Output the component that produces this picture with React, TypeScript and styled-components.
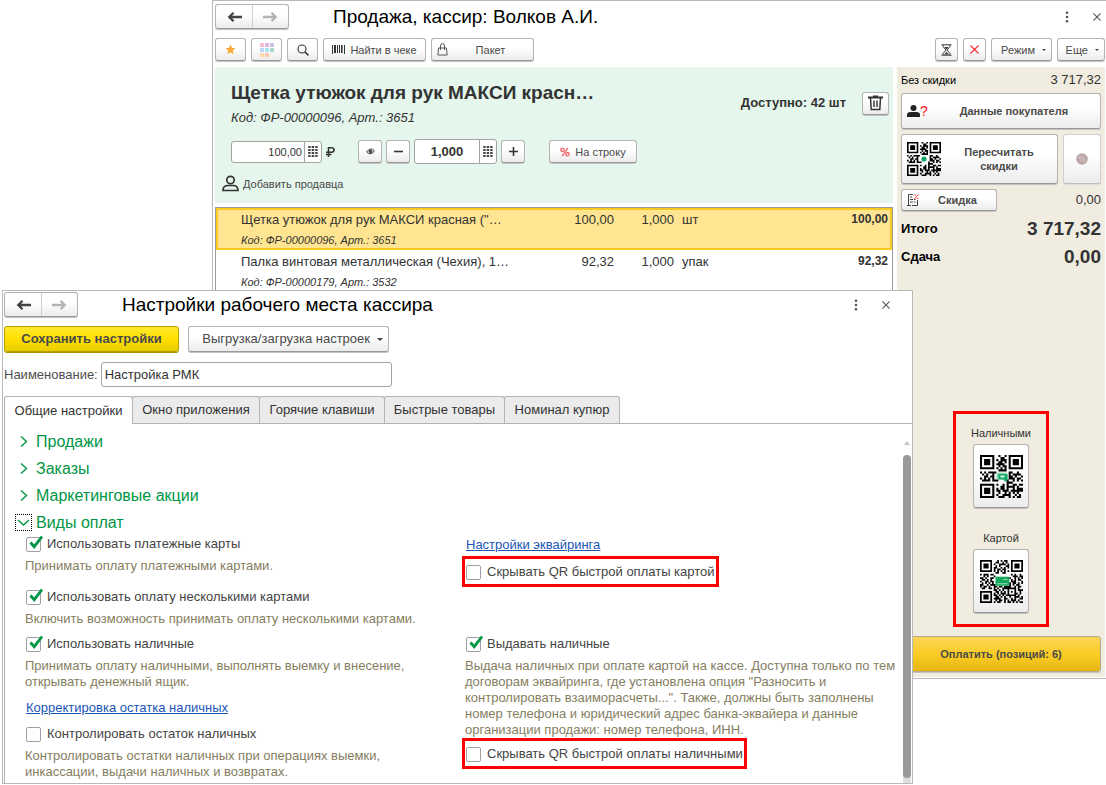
import React, { useId } from 'react';
import styled, { createGlobalStyle } from 'styled-components';

const GlobalStyle = createGlobalStyle`
  *, *::before, *::after { box-sizing: border-box; }
  body {
    margin: 0;
    background: #fff;
    color: #333;
    font: 13px/16px "Liberation Sans", Arial, sans-serif;
  }
  button, input { font: inherit; color: inherit; }
  svg { display: block; flex: none; }
`;

/* ---------- shared parts ---------- */

const Desktop = styled.main`
  position: relative;
  min-width: 1000px;
  min-height: 100vh;
`;

const PosWindow = styled.section`
  display: flex;
  flex-direction: column;
  min-height: 679px;
  margin-left: 212px;
  padding: 3px 1px 1px 2px;
  border: solid #b9b9b9;
  border-width: 1px 0 1px 1px;
  background: #fff;
`;

const SettingsWindow = styled.section`
  position: absolute;
  top: 290px;
  left: 2px;
  right: 193px;
  display: flex;
  flex-direction: column;
  padding: 1px 0 0 1px;
  border: 1px solid #b9b9b9;
  background: #fff;
`;

const TitleBar = styled.header<{ $inset: number }>`
  display: flex;
  align-items: center;
  padding-right: ${p => p.$inset}px;
`;

const Title = styled.h1`
  flex: 1;
  margin: 0 0 0 44px;
  color: #000;
  font-size: 19px;
  font-weight: 400;
  line-height: 24px;
  white-space: nowrap;
`;

const WindowTools = styled.div`
  display: flex;
  align-items: center;
  gap: 24px;
`;

const GhostButton = styled.button`
  display: flex;
  padding: 0;
  border: 0;
  background: none;
  color: #555;
`;

const Button = styled.button<{ $h?: number; $w?: number; $size?: number; $bold?: boolean; $faded?: boolean }>`
  display: inline-flex;
  flex: none;
  align-items: center;
  justify-content: center;
  gap: 5px;
  width: ${p => (p.$w ? p.$w + 'px' : 'auto')};
  height: ${p => p.$h ?? 23}px;
  padding: 0 5px;
  border: 1px solid ${p => (p.$faded ? '#cfcfcf' : '#b3b3b3')};
  border-bottom-color: ${p => (p.$faded ? '#bdbdbd' : '#999')};
  border-radius: 3px;
  background: linear-gradient(#fff 40%, #ececec);
  box-shadow: 0 1px 0 ${p => (p.$faded ? '#ddd' : '#c2c2c2')};
  color: #4a4a4a;
  font-size: ${p => p.$size ?? 11}px;
  font-weight: ${p => (p.$bold ? 700 : 400)};
  white-space: nowrap;
`;

const DropButton = styled(Button)`
  justify-content: flex-end;
  gap: 7px;
`;

const NavGroup = styled.div`
  display: flex;
  height: 25px;
  border: 1px solid #b3b3b3;
  border-bottom-color: #999;
  border-radius: 3px;
  background: linear-gradient(#fff 40%, #ececec);
  box-shadow: 0 1px 0 #c2c2c2;
`;

const NavButton = styled.button<{ $off?: boolean }>`
  display: flex;
  align-items: center;
  justify-content: center;
  width: 36px;
  padding: 0;
  border: 0;
  background: none;
  color: ${p => (p.$off ? '#b3b3b3' : '#444')};
  & + & { border-left: 1px solid #d0d0d0; }
`;

const ButtonText = styled.span`
  flex: 1;
  text-align: center;
`;

const Caret = styled.span<{ $wide?: boolean }>`
  border: solid transparent;
  border-width: ${p => (p.$wide ? '3px 3px 0' : '2px 2px 0')};
  border-top-color: #444;
`;

/* ---------- sale window ---------- */

const Toolbar = styled.div`
  display: flex;
  align-items: center;
  gap: 5px;
  padding: 9px 0 6px;
`;

const Spacer = styled.div`
  flex: 1;
`;

const PosBody = styled.div`
  display: flex;
  flex: 1;
  gap: 4px;
`;

const PosMain = styled.div`
  display: flex;
  flex: 1;
  flex-direction: column;
  gap: 4px;
  min-width: 0;
`;

const Card = styled.div`
  height: 136px;
  padding: 13px 4px 0 16px;
  background: #e5f6ed;
`;

const CardTop = styled.div`
  display: flex;
  align-items: center;
`;

const CardInfo = styled.div`
  flex: 1;
`;

const CardName = styled.h2`
  margin: 0;
  font-size: 19px;
  font-weight: 700;
  line-height: 26px;
`;

const CardCode = styled.p`
  margin: 4px 0 0;
  font-style: italic;
`;

const Stock = styled.strong`
  margin: 0 16px 0 0;
`;

const CardControls = styled.div`
  display: flex;
  align-items: center;
  gap: 4px;
  height: 25px;
  margin-top: 13px;
`;

const NumberBox = styled.div<{ $w: number; $big?: boolean }>`
  display: flex;
  width: ${p => p.$w}px;
  height: ${p => (p.$big ? 25 : 22)}px;
  border: 1px solid #a3a3a3;
  border-radius: 3px;
  background: #fff;
`;

const NumberInput = styled.input<{ $big?: boolean }>`
  flex: 1;
  min-width: 0;
  padding: 0 2px;
  border: 0;
  background: none;
  font-size: ${p => (p.$big ? 13 : 11)}px;
  font-weight: ${p => (p.$big ? 700 : 400)};
  text-align: ${p => (p.$big ? 'center' : 'right')};
`;

const KeypadButton = styled.button`
  display: flex;
  align-items: center;
  justify-content: center;
  width: 17px;
  padding: 0;
  border: 0;
  border-left: 1px solid #a3a3a3;
  background: none;
`;

const Currency = styled.span`
  width: 28px;
`;

const Gap = styled.span`
  width: 16px;
`;

const SellerButton = styled.button`
  display: flex;
  align-items: center;
  gap: 4px;
  margin: 11px 0 0 -9px;
  padding: 0;
  border: 0;
  background: none;
  color: #4a4a4a;
  font-size: 11px;
`;

const Lines = styled.div`
  flex: 1;
  border: solid #9a9a9a;
  border-width: 1px 1px 0;
`;

const LinesTable = styled.table`
  width: 100%;
  border-collapse: collapse;
  table-layout: fixed;
`;

const Line = styled.tr<{ $active?: boolean }>`
  height: 42px;
  background: ${p => (p.$active ? '#ffe591' : '#fff')};
  outline: ${p => (p.$active ? '2px solid #fac920' : 'none')};
  outline-offset: -2px;
`;

const CELL_PADDING = { name: '4px 0 0 25px', number: '4px 0 0', unit: '4px 0 0 8px', sum: '3px 4px 0 0' };

const Cell = styled.td<{ $kind: keyof typeof CELL_PADDING }>`
  padding: ${p => CELL_PADDING[p.$kind]};
  font-size: ${p => (p.$kind === 'sum' ? 12 : 13)}px;
  font-weight: ${p => (p.$kind === 'sum' ? 700 : 400)};
  text-align: ${p => (p.$kind === 'number' || p.$kind === 'sum' ? 'right' : 'left')};
  vertical-align: top;
  white-space: nowrap;
`;

const LineCode = styled.div`
  margin-top: 4px;
  font-size: 11px;
  font-style: italic;
`;

const Side = styled.aside`
  display: flex;
  flex: none;
  flex-direction: column;
  width: 208px;
  padding: 4px 4px 5px;
  background: #f0ece0;
`;

const SideRow = styled.div<{ $gap?: number; $top?: number; $h?: number }>`
  display: flex;
  align-items: center;
  justify-content: space-between;
  gap: ${p => p.$gap ?? 0}px;
  min-height: ${p => p.$h ?? 18}px;
  margin-top: ${p => p.$top ?? 0}px;
`;

const SideLabel = styled.span<{ $bold?: boolean }>`
  color: #000;
  font-size: ${p => (p.$bold ? 13 : 11)}px;
  font-weight: ${p => (p.$bold ? 700 : 400)};
`;

const Amount = styled.span<{ $big?: boolean }>`
  font-size: ${p => (p.$big ? 19 : 13)}px;
  font-weight: ${p => (p.$big ? 700 : 400)};
`;

const WideButton = styled(Button)`
  flex: 1;
  line-height: 14px;
  white-space: normal;
`;

const BuyerIcon = styled.span`
  display: flex;
  color: #f11;
  font-size: 14px;
  font-weight: 400;
`;

const QuickPay = styled.div`
  display: flex;
  flex-direction: column;
  align-items: center;
  align-self: center;
  width: 96px;
  margin: auto 0 9px;
  padding: 11px 0;
  border: 3px solid #f00;
`;

const QuickLabel = styled.span<{ $top?: number }>`
  margin: ${p => p.$top ?? 0}px 0 3px;
  font-size: 11px;
`;

const PayButton = styled(Button)`
  background: linear-gradient(#fcd558, #f9cb20 55%, #e6b617);
  border-color: #b3aa90;
`;

/* ---------- settings window ---------- */

const Actions = styled.div`
  display: flex;
  gap: 9px;
  padding-top: 9px;
`;

const SaveButton = styled(Button)`
  border-color: #b39f00;
  background: linear-gradient(#ffe92e, #ffe000 50%, #e8cd00);
  box-shadow: 0 1px 0 #a89500;
`;

const NameRow = styled.div`
  display: flex;
  align-items: center;
  gap: 3px;
  padding: 10px 0 9px;
  color: #4d4d4d;
`;

const NameInput = styled.input`
  width: 291px;
  height: 25px;
  padding: 0 3px;
  border: 1px solid #a3a3a3;
  border-radius: 3px;
  background: #fff;
  color: #333;
`;

const Tabs = styled.div`
  display: flex;
  border-bottom: 1px solid #b3b3b3;
`;

const Tab = styled.button<{ $w: number; $on?: boolean }>`
  width: ${p => p.$w}px;
  height: ${p => (p.$on ? 28 : 27)}px;
  margin: 0 -1px ${p => (p.$on ? -1 : 0)}px 0;
  padding: 0;
  border: 1px solid #b3b3b3;
  border-bottom: 0;
  border-radius: 3px 3px 0 0;
  background: ${p => (p.$on ? '#fff' : '#ebebeb')};
  white-space: nowrap;
`;

const Panel = styled.div`
  display: flex;
  border-left: 1px solid #b3b3b3;
`;

const PanelBody = styled.div`
  flex: 1;
  padding: 4px 0 3px;
`;

const Scroller = styled.div`
  display: flex;
  flex-direction: column;
  align-items: center;
  width: 10px;
  padding-top: 17px;
`;

const ScrollTrack = styled.div`
  flex: 1;
  width: 8px;
  margin-top: 10px;
  padding-bottom: 5px;
  background: linear-gradient(transparent 50%, #ddd 50%);
`;

const ScrollThumb = styled.div`
  height: 100%;
  border-radius: 4px;
  background: #999;
`;

const SectionTitle = styled.h2`
  margin: 0;
  font-size: 16px;
  font-weight: 400;
`;

const SectionButton = styled.button`
  display: flex;
  align-items: center;
  gap: 4px;
  height: 27px;
  padding: 0 0 0 10px;
  border: 0;
  background: none;
  color: #009646;
`;

const SectionMark = styled.span<{ $open?: boolean }>`
  display: flex;
  align-items: center;
  justify-content: center;
  width: 17px;
  height: 17px;
  border: 1px dotted ${p => (p.$open ? '#000' : 'transparent')};
`;

const Columns = styled.div`
  display: grid;
  grid-template-columns: 1fr 1fr;
  padding-left: 20px;
  margin: 0 -3px 9px 0;
  &:last-child { margin-bottom: 0; }
`;

const Column = styled.div`
  display: flex;
  flex-direction: column;
  align-items: flex-start;
`;

const CheckLabel = styled.label`
  display: flex;
  align-items: center;
  gap: 6px;
  height: 16px;
  padding-left: 1px;
  color: #444;
  white-space: nowrap;
`;

const CheckBox = styled.span`
  position: relative;
  display: flex;
`;

const CheckInput = styled.input`
  appearance: none;
  width: 15px;
  height: 15px;
  margin: 0;
  border: 1px solid #a0a0a0;
  border-radius: 2px;
  background: #fff;
  & + svg { display: none; }
  &:checked + svg { display: block; }
`;

const CheckMark = styled.svg`
  position: absolute;
  right: -2px;
  bottom: 2px;
  pointer-events: none;
`;

const Hint = styled.p<{ $last?: boolean; $narrow?: boolean }>`
  margin: 6px ${p => (p.$narrow ? 40 : 8)}px ${p => (p.$last ? 0 : 15)}px 0;
  color: #857e5f;
`;

const Link = styled.a<{ $top: number; $bottom: number }>`
  margin: ${p => p.$top}px 0 ${p => p.$bottom}px 1px;
  color: #1a55b8;
`;

const Highlight = styled.div`
  margin-left: -3px;
  padding: 5px 1px 4px 0;
  border: 3px solid #f00;
`;

/* ---------- icons ---------- */

const Arrow = ({ flip }: { flip?: boolean }) => (
  <svg width="15" height="12" viewBox="0 0 15 12" fill="none" stroke="currentColor" strokeWidth="2.300">
    {flip ? <path d="M0 6h13M8.500 1.800L12.700 6l-4.200 4.200" /> : <path d="M15 6H2M6.500 1.800L2.300 6l4.200 4.200" />}
  </svg>
);

const Dots = () => (
  <svg width="4" height="12" viewBox="0 0 4 12" fill="currentColor">
    <circle cx="2" cy="1.800" r="1.300" /><circle cx="2" cy="6" r="1.300" /><circle cx="2" cy="10.200" r="1.300" />
  </svg>
);

const Cross = ({ size = 8, color = 'currentColor' }: { size?: number; color?: string }) => (
  <svg width={size} height={size} viewBox="0 0 8 8" stroke={color} strokeWidth="1.100">
    <path d="M.4.4l7.200 7.200M7.600.4L.4 7.600" />
  </svg>
);

const Star = () => (
  <svg width="11" height="11" viewBox="0 0 11 11" fill="#fbab35">
    <path d="M5.5.6l1.4 3.2 3.6.4-2.7 2.4.8 3.6-3.1-1.9-3.1 1.9.8-3.6L.5 4.2l3.6-.4z" />
  </svg>
);

const SWATCHES = ['#f6bccb', '#dcb7e2', '#c3c6e8', '#b7d9f6', '#aee6f0', '#a9d8d2', '#fcdca8', '#fbcab0'];
const Palette = () => (
  <svg width="14" height="14" viewBox="0 0 14 14">
    {SWATCHES.map((c, i) => (
      <rect key={c} x={(i % 3) * 5} y={Math.floor(i / 3) * 5} width="4" height="4" fill={c} />
    ))}
  </svg>
);

const Loupe = () => (
  <svg width="12" height="12" viewBox="0 0 12 12" fill="none" stroke="#333">
    <circle cx="5" cy="5" r="4" strokeWidth="1.100" /><path d="M8 8l3.400 3.400" strokeWidth="1.600" />
  </svg>
);

const Barcode = () => (
  <svg width="13" height="9" viewBox="0 0 13 9" fill="#333">
    <path d="M0 0h1v9H0zM2 0h2v8H2zM5 0h1v8H5zM7 0h1v8H7zM9 0h1.600v8H9zM12 0h1v9h-1z" />
  </svg>
);

const Bag = () => (
  <svg width="11" height="13" viewBox="0 0 11 13" fill="none" stroke="#555">
    <path d="M1.500 5h8l.6 7H.9zM3.500 7V3q0-2.400 2-2.400t2 2.400v4" />
  </svg>
);

const Hourglass = () => (
  <svg width="11" height="12" viewBox="0 0 11 12" fill="none" stroke="#333">
    <path d="M.5.8h10M.5 11.200h10M2 1v1.500L5 6 2 9.500V11M9 1v1.500L6 6l3 3.500V11" />
    <path d="M3.500 3h4L5.500 5.500zM3 10.500l2.500-2.500L8 10.500z" fill="#333" stroke="none" />
  </svg>
);

const Trash = () => (
  <svg width="15" height="16" viewBox="0 0 15 16" fill="none" stroke="#333">
    <path d="M0 2.500h15M5 1.500h5" strokeWidth="2" />
    <path d="M2.500 3l.7 11.500h8.600L12.500 3" strokeWidth="1.500" /><path d="M6 5.500v6.500M9 5.500v6.500" strokeWidth="1.400" />
  </svg>
);

const Keypad = () => (
  <svg width="10" height="12" viewBox="0 0 10 12" fill="#444">
    {[0, 1, 2, 3].map(r => [0, 1, 2].map(c => (
      <rect key={r + '-' + c} x={c * 3.5 + 0.2} y={r * 3} width="2.400" height="2" />
    )))}
  </svg>
);

const Ruble = () => (
  <svg width="9" height="10" viewBox="0 0 9 10" fill="none" stroke="#333" strokeWidth="1.600">
    <path d="M2.500 10V.8h3Q8 .8 8 3T5.500 5.200H0M0 7.500h5.500" />
  </svg>
);

const Eye = () => (
  <svg width="9" height="7" viewBox="0 0 9 7" fill="none" stroke="#444">
    <path d="M.5 4Q4.500-1.500 8.500 3M.5 4q4 4 8-1" /><circle cx="4.500" cy="3.500" r="1.500" fill="#444" />
  </svg>
);

const Sign = ({ plus }: { plus?: boolean }) => (
  <svg width="9" height="9" viewBox="0 0 9 9" stroke="#333" strokeWidth="1.600">
    <path d={plus ? 'M0 4.500h9M4.500 0v9' : 'M0 4.500h9'} />
  </svg>
);

const Percent = () => (
  <svg width="10" height="10" viewBox="0 0 10 10" fill="none" stroke="#f26a6e" strokeWidth="1.400">
    <circle cx="2.500" cy="2.800" r="1.700" /><circle cx="7.500" cy="7.200" r="1.700" /><path d="M8 .8L2 9.200" />
  </svg>
);

const Person = () => (
  <svg width="17" height="17" viewBox="0 0 17 17" fill="none" stroke="#333" strokeWidth="1.700">
    <circle cx="8.500" cy="5" r="3.700" /><path d="M1 15.500q0-5 5-5h5q5 0 5 5z" />
  </svg>
);

const PersonSolid = () => (
  <svg width="13" height="14" viewBox="0 0 13 14" fill="#222">
    <circle cx="6.500" cy="4" r="3" /><path d="M0 13V11q0-3 3.500-3h6q3.500 0 3.500 3v2z" />
  </svg>
);

const Receipt = () => (
  <svg width="12" height="12" viewBox="0 0 12 12" fill="none" stroke="#444">
    <path d="M6 .5H1.500v11M0 11.500h4M3 3h2M3 5.500h3M3 8h3M7 5.500h1.500M7 8h1.500M10.500 6v5.500H5" />
    <path d="M11.500.5l-4 4.500M7.500 1h1.500M10 4.500h1.500" stroke="#f33" />
  </svg>
);

const RoundPercent = () => (
  <svg width="12" height="12" viewBox="0 0 12 12">
    <circle cx="6" cy="6" r="5.800" fill="#bba7a7" />
    <g fill="none" stroke="#d6c8c8"><circle cx="4" cy="4.500" r="1.200" /><circle cx="8" cy="7.500" r="1.200" /><path d="M8 3L4 9" /></g>
  </svg>
);

const Chevron = ({ down }: { down?: boolean }) => (
  <svg width="13" height="13" viewBox="0 0 13 13" fill="none" stroke="currentColor" strokeWidth="1.400">
    <path d={down ? 'M1 4l5.500 5L12 4' : 'M4 1.500l5.500 5L4 11.500'} />
  </svg>
);

const CODE_CASH = [
  '#######..#..#.#######', '#.....#...##..#.....#', '#.###.#.#.###.#.###.#', '#.###.#..##.#.#.###.#',
  '#.###.#.####..#.###.#', '#.....#..#.##.#.....#', '#######.#.#.#.#######', '.........####........',
  '#.#.####......##..#..', '.#.#..#.......#.####.', '..##.##.......##.#..#', '#.#.#.#.......###.##.',
  '.####.###....#..#.#.#', '.............###.....', '#######.#..#.#..##.##', '#.....#...##.####.#..',
  '#.###.#.#.##.#..#.###', '#.###.#.##.###.######', '#.###.#..#..#.#.#.#..', '#.....#.#..####..#.#.', '#######..###..#.#.##.',
];
const CODE_CARD = [
  '#######...#.#.##..#######', '#.....#..##..#.#..#.....#', '#.###.#.#..####.#.#.###.#', '#.###.#..#.#...##.#.###.#',
  '#.###.#.##..#.#.#.#.###.#', '#.....#.#.##.##...#.....#', '#######.#.#.#.#.#.#######', '.........##..##..........',
  '#.###.##..........#.#..#.', '..#.#...#..........###.##', '##.#..##.........#..#.#.#', '.##.#.#...........#.#.##.',
  '#..##.##..........###...#', '.#.#.#.#.........#.##.#.#', '##..#.###........#.#.##..', '#.##.#..##.##.####..#.##.',
  '.##..##.#.#..########.#..', '........##.#.#..#...#.###', '#######..##.#.#.#.#.#..#.', '#.....#.#.#.###.#...##.#.',
  '#.###.#.##.#.#.######.#..', '#.###.#..##.#.#..#..###.#', '#.###.#.####..##..#.#..##', '#.....#..#.##.#.#.###.#..', '#######.#.##..#.##.#.#.##',
];

const QrCode = ({ rows, size, mark }: { rows: string[]; size: number; mark: 'dot' | 'cash' | 'card' }) => {
  const n = rows.length;
  const d = rows.map((row, y) => row.split('').map((c, x) => (c === '#' ? `M${x} ${y}h1v1h-1z` : '')).join('')).join('');
  return (
    <svg width={size} height={size} viewBox={`0 0 ${n} ${n}`}>
      <path d={d} fill="#000" />
      {mark === 'dot' && <circle cx="10.500" cy="10.500" r="1.600" fill="#13a866" />}
      {mark === 'cash' && (
        <g>
          <path d="M8 8.600h5v3H8z" fill="#8fd5b3" /><path d="M9 9.300h4.500v2.700H9z" fill="#13a866" />
          <path d="M10 10h2v1h-2z" fill="#d8f3e6" /><circle cx="12.500" cy="12" r=".9" fill="#13a866" />
        </g>
      )}
      {mark === 'card' && (
        <g>
          <rect x="9" y="9.800" width="8" height="5.200" rx=".4" fill="#13a85c" />
          <path d="M13.500 11.300h2.500M10 13.800h6" stroke="#b6e6cc" strokeWidth=".5" />
        </g>
      )}
    </svg>
  );
};

/* ---------- composed pieces ---------- */

const NavButtons = () => (
  <NavGroup>
    <NavButton type="button" aria-label="Назад"><Arrow /></NavButton>
    <NavButton type="button" aria-label="Вперед" $off><Arrow flip /></NavButton>
  </NavGroup>
);

const WindowHeader = ({ title, inset }: { title: string; inset: number }) => (
  <TitleBar $inset={inset}>
    <NavButtons />
    <Title>{title}</Title>
    <WindowTools>
      <GhostButton type="button" aria-label="Меню"><Dots /></GhostButton>
      <GhostButton type="button" aria-label="Закрыть"><Cross /></GhostButton>
    </WindowTools>
  </TitleBar>
);

const Check = ({ label, checked }: { label: string; checked?: boolean }) => {
  const id = useId();
  return (
    <CheckLabel htmlFor={id}>
      <CheckBox>
        <CheckInput id={id} type="checkbox" defaultChecked={checked} />
        <CheckMark width="15" height="15" viewBox="0 0 15 15" fill="none" stroke="#009646" strokeWidth="2.800">
          <path d="M2.500 7.500l3.700 4.200L14 1.500" />
        </CheckMark>
      </CheckBox>
      {label}
    </CheckLabel>
  );
};

const Section = ({ title, open }: { title: string; open?: boolean }) => (
  <SectionTitle>
    <SectionButton type="button" aria-expanded={!!open}>
      <SectionMark $open={open}><Chevron down={open} /></SectionMark>
      {title}
    </SectionButton>
  </SectionTitle>
);

const LINES = [
  { name: 'Щетка утюжок для рук МАКСИ красная ("…', code: 'Код: ФР-00000096, Арт.: 3651', price: '100,00', qty: '1,000', unit: 'шт', sum: '100,00' },
  { name: 'Палка винтовая металлическая (Чехия), 1…', code: 'Код: ФР-00000179, Арт.: 3532', price: '92,32', qty: '1,000', unit: 'упак', sum: '92,32' },
];

const TABS = [
  { name: 'Общие настройки', w: 129 }, { name: 'Окно приложения', w: 128 }, { name: 'Горячие клавиши', w: 126 },
  { name: 'Быстрые товары', w: 121 }, { name: 'Номинал купюр', w: 116 },
];

const SaleWindow = () => (
  <PosWindow>
    <WindowHeader title="Продажа, кассир: Волков А.И." inset={4} />
    <Toolbar>
      <Button type="button" $w={31} aria-label="Избранное"><Star /></Button>
      <Button type="button" $w={31} aria-label="Палитра"><Palette /></Button>
      <Button type="button" $w={31} aria-label="Поиск"><Loupe /></Button>
      <Button type="button" $w={103}><Barcode />Найти в чеке</Button>
      <Button type="button" $w={103}><Bag /><ButtonText>Пакет</ButtonText></Button>
      <Spacer />
      <Button type="button" $w={23} aria-label="Отложить"><Hourglass /></Button>
      <Button type="button" $w={23} aria-label="Отменить"><Cross size={9} color="#f33" /></Button>
      <DropButton type="button" $w={61}>Режим <Caret /></DropButton>
      <DropButton type="button" $w={48}>Еще <Caret /></DropButton>
    </Toolbar>
    <PosBody>
      <PosMain>
        <Card>
          <CardTop>
            <CardInfo>
              <CardName>Щетка утюжок для рук МАКСИ красн…</CardName>
              <CardCode>Код: ФР-00000096, Арт.: 3651</CardCode>
            </CardInfo>
            <Stock>Доступно: 42 шт</Stock>
            <Button type="button" $w={27} aria-label="Удалить"><Trash /></Button>
          </CardTop>
          <CardControls>
            <NumberBox $w={91}>
              <NumberInput aria-label="Цена" defaultValue="100,00" />
              <KeypadButton type="button" aria-label="Калькулятор цены"><Keypad /></KeypadButton>
            </NumberBox>
            <Currency><Ruble /></Currency>
            <Button type="button" $w={24} aria-label="Показать"><Eye /></Button>
            <Button type="button" $w={24} aria-label="Меньше"><Sign /></Button>
            <NumberBox $w={83} $big>
              <NumberInput aria-label="Количество" defaultValue="1,000" $big />
              <KeypadButton type="button" aria-label="Калькулятор количества"><Keypad /></KeypadButton>
            </NumberBox>
            <Button type="button" $w={24} aria-label="Больше"><Sign plus /></Button>
            <Gap />
            <Button type="button" $w={88}><Percent />На строку</Button>
          </CardControls>
          <SellerButton type="button"><Person />Добавить продавца</SellerButton>
        </Card>
        <Lines>
          <LinesTable>
            <colgroup>
              <col /><col width="100" /><col width="60" /><col width="80" /><col width="138" />
            </colgroup>
            <tbody>
              {LINES.map((l, i) => (
                <Line key={l.code} $active={i === 0}>
                  <Cell $kind="name">{l.name}<LineCode>{l.code}</LineCode></Cell>
                  <Cell $kind="number">{l.price}</Cell>
                  <Cell $kind="number">{l.qty}</Cell>
                  <Cell $kind="unit">{l.unit}</Cell>
                  <Cell $kind="sum">{l.sum}</Cell>
                </Line>
              ))}
            </tbody>
          </LinesTable>
        </Lines>
      </PosMain>
      <Side>
        <SideRow><SideLabel>Без скидки</SideLabel><Amount>3 717,32</Amount></SideRow>
        <SideRow $top={4}>
          <WideButton type="button" $h={36} $bold>
            <BuyerIcon><PersonSolid />?</BuyerIcon><ButtonText>Данные покупателя</ButtonText>
          </WideButton>
        </SideRow>
        <SideRow $top={5} $gap={5}>
          <WideButton type="button" $h={50} $bold>
            <QrCode rows={CODE_CASH} size={34} mark="dot" /><ButtonText>Пересчитать<br />скидки</ButtonText>
          </WideButton>
          <Button type="button" $h={50} $w={38} $faded aria-label="Процент скидки"><RoundPercent /></Button>
        </SideRow>
        <SideRow $top={5}>
          <Button type="button" $w={96} $h={22} $bold><Receipt /><ButtonText>Скидка</ButtonText></Button>
          <Amount>0,00</Amount>
        </SideRow>
        <SideRow $top={4} $h={28}><SideLabel $bold>Итого</SideLabel><Amount $big>3 717,32</Amount></SideRow>
        <SideRow $h={28}><SideLabel $bold>Сдача</SideLabel><Amount $big>0,00</Amount></SideRow>
        <QuickPay>
          <QuickLabel>Наличными</QuickLabel>
          <Button type="button" $w={56} $h={64} aria-label="Оплата наличными"><QrCode rows={CODE_CASH} size={43} mark="cash" /></Button>
          <QuickLabel $top={22}>Картой</QuickLabel>
          <Button type="button" $w={56} $h={64} aria-label="Оплата картой"><QrCode rows={CODE_CARD} size={43} mark="card" /></Button>
        </QuickPay>
        <PayButton type="button" $h={36} $bold>Оплатить (позиций: 6)</PayButton>
      </Side>
    </PosBody>
  </PosWindow>
);

const WorkplaceSettings = () => (
  <SettingsWindow>
    <WindowHeader title="Настройки рабочего места кассира" inset={22} />
    <Actions>
      <SaveButton type="button" $w={175} $h={26} $size={13} $bold>Сохранить настройки</SaveButton>
      <DropButton type="button" $w={201} $h={26} $size={13}>Выгрузка/загрузка настроек <Caret $wide /></DropButton>
    </Actions>
    <NameRow>
      <label htmlFor="profile-name">Наименование:</label>
      <NameInput id="profile-name" defaultValue="Настройка РМК" />
    </NameRow>
    <Tabs role="tablist">
      {TABS.map((t, i) => (
        <Tab key={t.name} type="button" role="tab" aria-selected={i === 0} $w={t.w} $on={i === 0}>{t.name}</Tab>
      ))}
    </Tabs>
    <Panel role="tabpanel">
      <PanelBody>
        <Section title="Продажи" />
        <Section title="Заказы" />
        <Section title="Маркетинговые акции" />
        <Section title="Виды оплат" open />
        <Columns>
          <Column>
            <Check label="Использовать платежные карты" checked />
            <Hint $narrow>Принимать оплату платежными картами.</Hint>
            <Check label="Использовать оплату несколькими картами" checked />
            <Hint $narrow $last>Включить возможность принимать оплату несколькими картами.</Hint>
          </Column>
          <Column>
            <Link href="#acquiring" $top={1} $bottom={3}>Настройки эквайринга</Link>
            <Highlight><Check label="Скрывать QR быстрой оплаты картой" /></Highlight>
          </Column>
        </Columns>
        <Columns>
          <Column>
            <Check label="Использовать наличные" checked />
            <Hint $narrow $last>Принимать оплату наличными, выполнять выемку и внесение, открывать денежный ящик.</Hint>
            <Link href="#cash-correction" $top={10} $bottom={10}>Корректировка остатка наличных</Link>
            <Check label="Контролировать остаток наличных" />
            <Hint $narrow $last>Контролировать остатки наличных при операциях выемки, инкассации, выдачи наличных и возвратах.</Hint>
          </Column>
          <Column>
            <Check label="Выдавать наличные" checked />
            <Hint $last>
              Выдача наличных при оплате картой на кассе. Доступна только по тем договорам эквайринга, где установлена опция
              "Разносить и контролировать взаиморасчеты...". Также, должны быть заполнены номер телефона и юридический адрес
              банка-эквайера и данные организации продажи: номер телефона, ИНН.
            </Hint>
            <Highlight><Check label="Скрывать QR быстрой оплаты наличными" /></Highlight>
          </Column>
        </Columns>
      </PanelBody>
      <Scroller aria-hidden="true">
        <svg width="6" height="4" viewBox="0 0 6 4" fill="#c4c4c4"><path d="M3 0l3 4H0z" /></svg>
        <ScrollTrack><ScrollThumb /></ScrollTrack>
      </Scroller>
    </Panel>
  </SettingsWindow>
);

export default function App() {
  return (
    <>
      <GlobalStyle />
      <Desktop>
        <SaleWindow />
        <WorkplaceSettings />
      </Desktop>
    </>
  );
}
